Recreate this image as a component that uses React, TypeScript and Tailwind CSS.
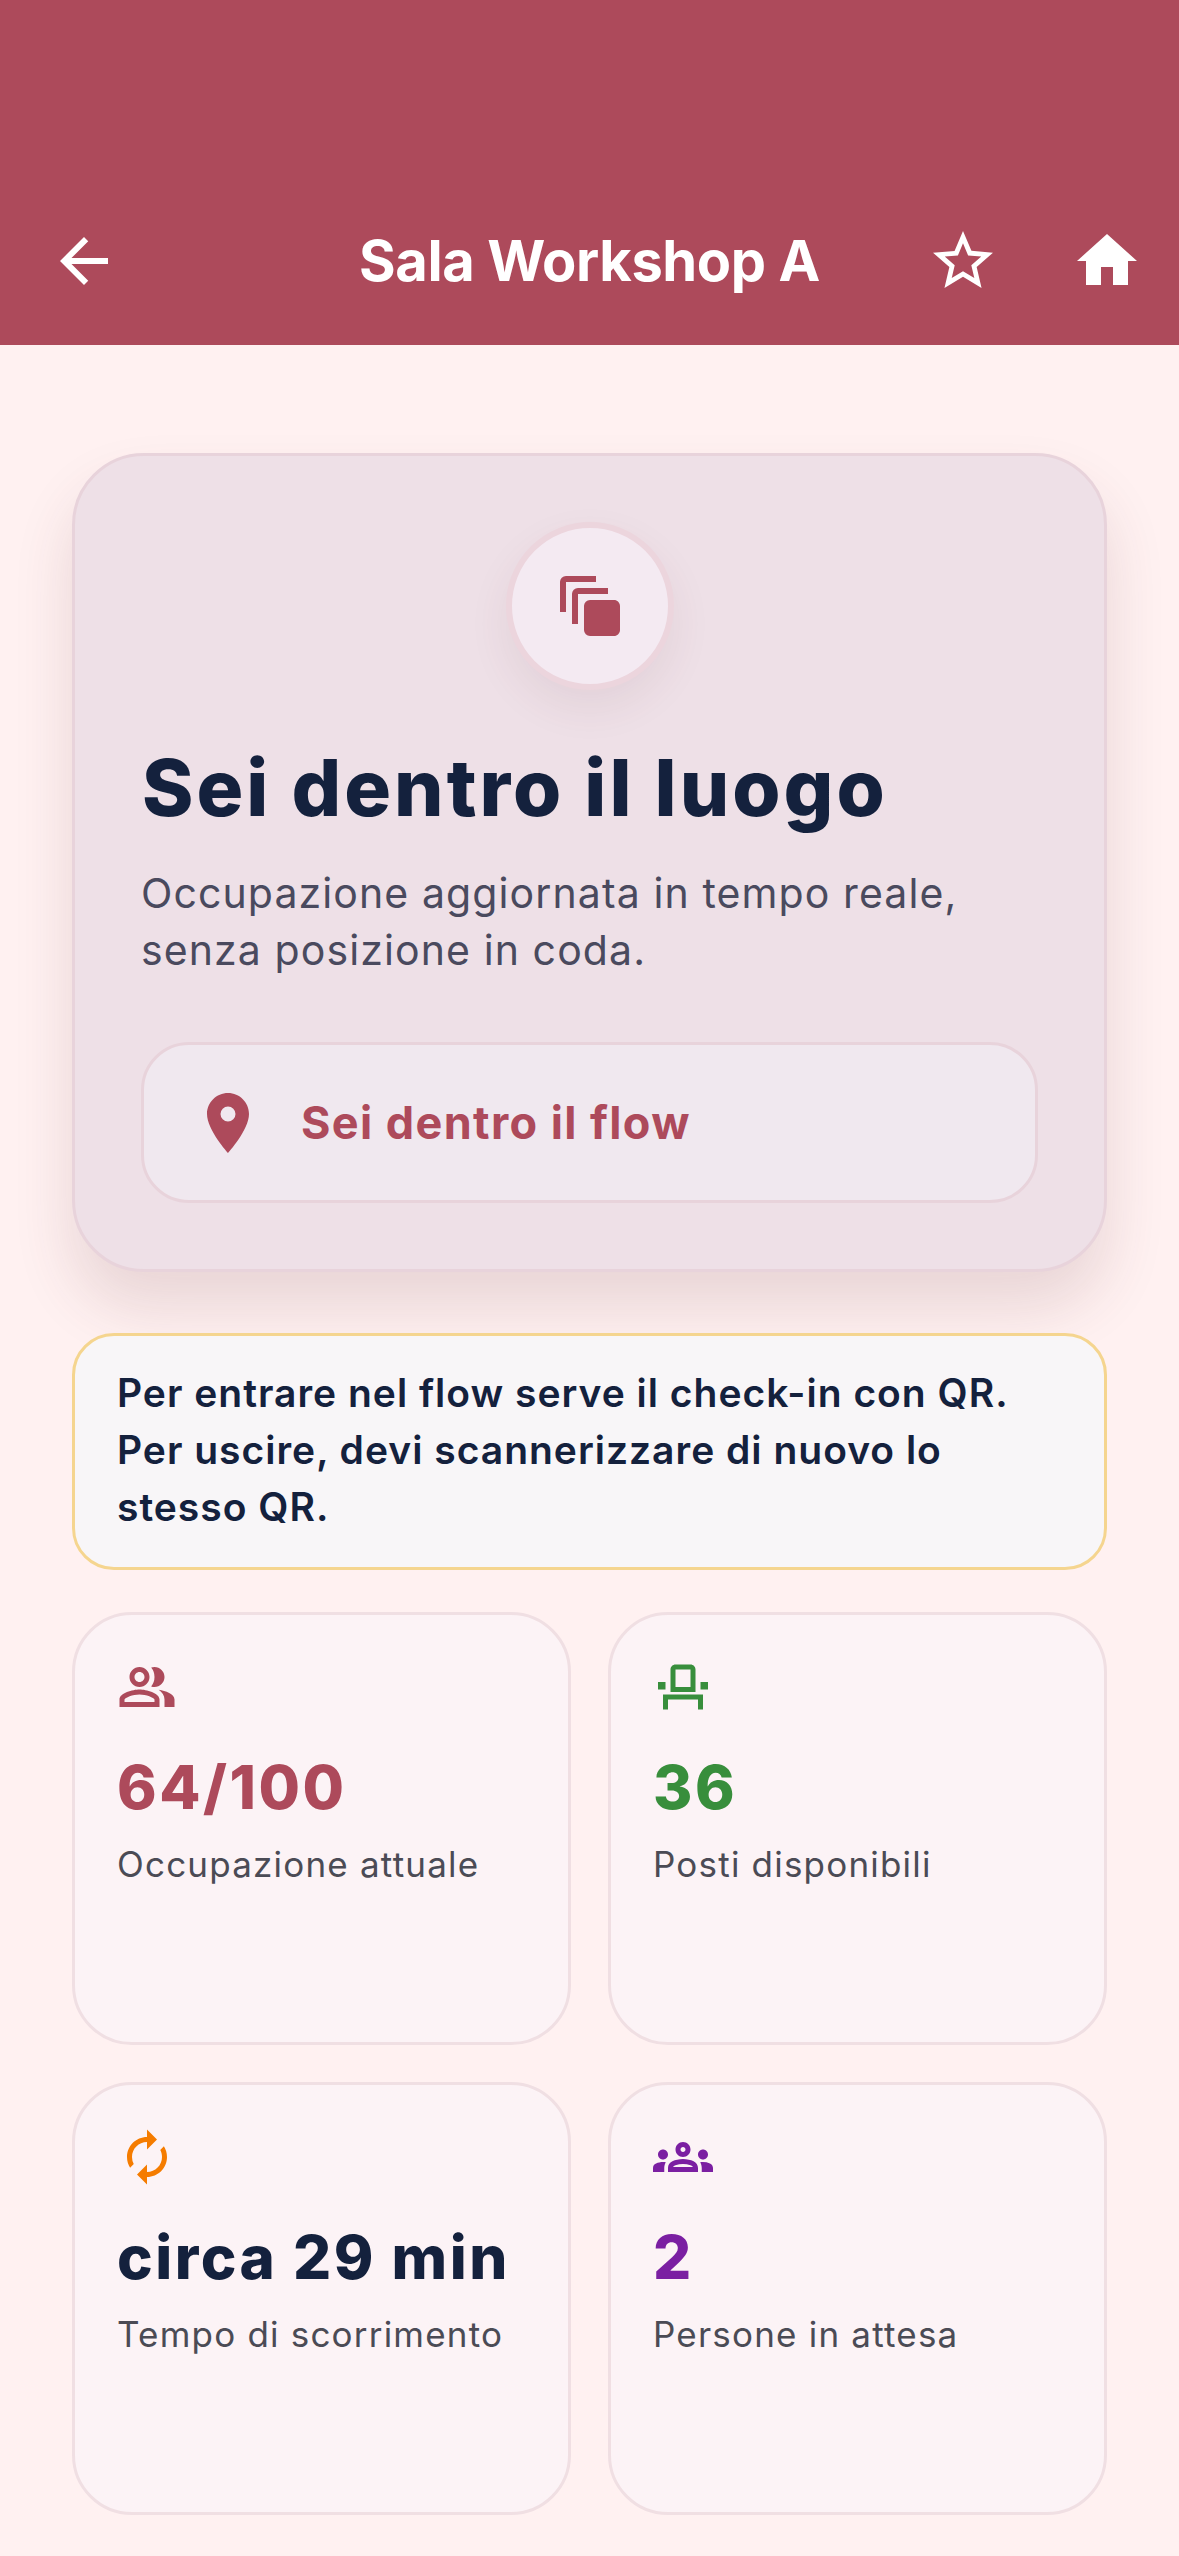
import React from 'react';
import {
  MdArrowBack,
  MdAutoAwesomeMotion,
  MdAutorenew,
  MdHome,
  MdOutlineEventSeat,
  MdOutlineGroups,
  MdOutlinePeopleAlt,
  MdPlace,
  MdStarBorder,
} from 'react-icons/md';

type Stat = {
  icon: React.ReactNode;
  value: string;
  label: string;
  valueClass: string;
};

const stats: Stat[] = [
  {
    icon: <MdOutlinePeopleAlt size={60} className="text-[#ad4a5b]" />,
    value: '64/100',
    label: 'Occupazione attuale',
    valueClass: 'text-[#ad4a5b]',
  },
  {
    icon: <MdOutlineEventSeat size={60} className="text-[#388e3c]" />,
    value: '36',
    label: 'Posti disponibili',
    valueClass: 'text-[#388e3c]',
  },
  {
    icon: <MdAutorenew size={60} className="text-[#f57c00]" />,
    value: 'circa 29 min',
    label: 'Tempo di scorrimento',
    valueClass: 'text-[#14213d]',
  },
  {
    icon: <MdOutlineGroups size={60} className="text-[#7b1fa2]" />,
    value: '2',
    label: 'Persone in attesa',
    valueClass: 'text-[#7b1fa2]',
  },
];

const StatCard: React.FC<{ stat: Stat }> = ({ stat }) => (
  <div className="h-[433px] rounded-[60px] border-[3px] border-[#f0dfe3] bg-[#fcf3f6] pl-[42px] pr-4 pt-[42px]">
    <div className="h-[60px]">{stat.icon}</div>
    <div className={`mt-[30px] text-[60px] font-extrabold leading-[80px] tracking-[2.5px] ${stat.valueClass}`}>{stat.value}</div>
    <div className="mt-[12px] text-[35px] leading-[50px] tracking-[1.2px] text-[#4b4b55]">{stat.label}</div>
  </div>
);

const App: React.FC = () => {
  return (
    <div className="min-h-screen bg-[#fff1f1] font-['Inter',sans-serif]">
      <header className="flex h-[345px] items-end bg-[#ad4a5b] pb-[48px] text-white">
        <button className="ml-[48px] flex h-[72px] w-[72px] items-center justify-center">
          <MdArrowBack size={72} />
        </button>
        <h1 className="flex-1 pl-[132px] text-center text-[56px] font-bold leading-[72px] tracking-[-0.4px]">Sala Workshop A</h1>
        <MdStarBorder size={72} />
        <MdHome size={72} className="ml-[72px] mr-[36px]" />
      </header>

      <main className="px-[72px] pt-[108px]">
        <section className="h-[819px] rounded-[72px] border-[3px] border-[#e8d3db] bg-[#eee0e7] px-[66px] pt-[66px] shadow-[0_36px_60px_rgba(100,50,60,0.14)]">
          <div className="flex justify-center">
            <div className="flex h-[168px] w-[168px] items-center justify-center rounded-full border-[6px] border-[#ecd5dd] bg-[#f4eaf2] shadow-[0_18px_40px_rgba(100,50,60,0.08)]">
              <MdAutoAwesomeMotion size={72} className="text-[#ad4a5b]" />
            </div>
          </div>
          <h2 className="mt-[48px] pl-[1px] text-[78px] font-extrabold leading-[100px] tracking-[3px] text-[#14213d]">Sei dentro il luogo</h2>
          <p className="mt-[27px] text-[41px] leading-[57px] tracking-[1.1px] text-[#4a4a5e]">
            Occupazione aggiornata in tempo reale,
            <br />
            senza posizione in coda.
          </p>
          <div className="mt-[63px] flex h-[161px] items-center rounded-[48px] border-[3px] border-[#e8d3db] bg-[#f0e8ef] pl-[48px]">
            <MdPlace size={72} className="text-[#ad4a5b]" />
            <span className="ml-[37px] text-[45px] font-bold tracking-[1.4px] text-[#ad4a5b]">Sei dentro il flow</span>
          </div>
        </section>

        <div className="mt-[61px] h-[237px] rounded-[42px] border-[3px] border-[#f5d58f] bg-[#f8f6f8] px-[42px] pt-[28px] text-[39px] font-semibold leading-[57px] tracking-[1px] text-[#14213d]">
          Per entrare nel flow serve il check-in con QR.
          <br />
          Per uscire, devi scannerizzare di nuovo lo
          <br />
          stesso QR.
        </div>

        <div className="mt-[42px] grid grid-cols-2 gap-[37px]">
          {stats.map((stat) => (
            <StatCard key={stat.label} stat={stat} />
          ))}
        </div>
      </main>
    </div>
  );
};

export default App;
